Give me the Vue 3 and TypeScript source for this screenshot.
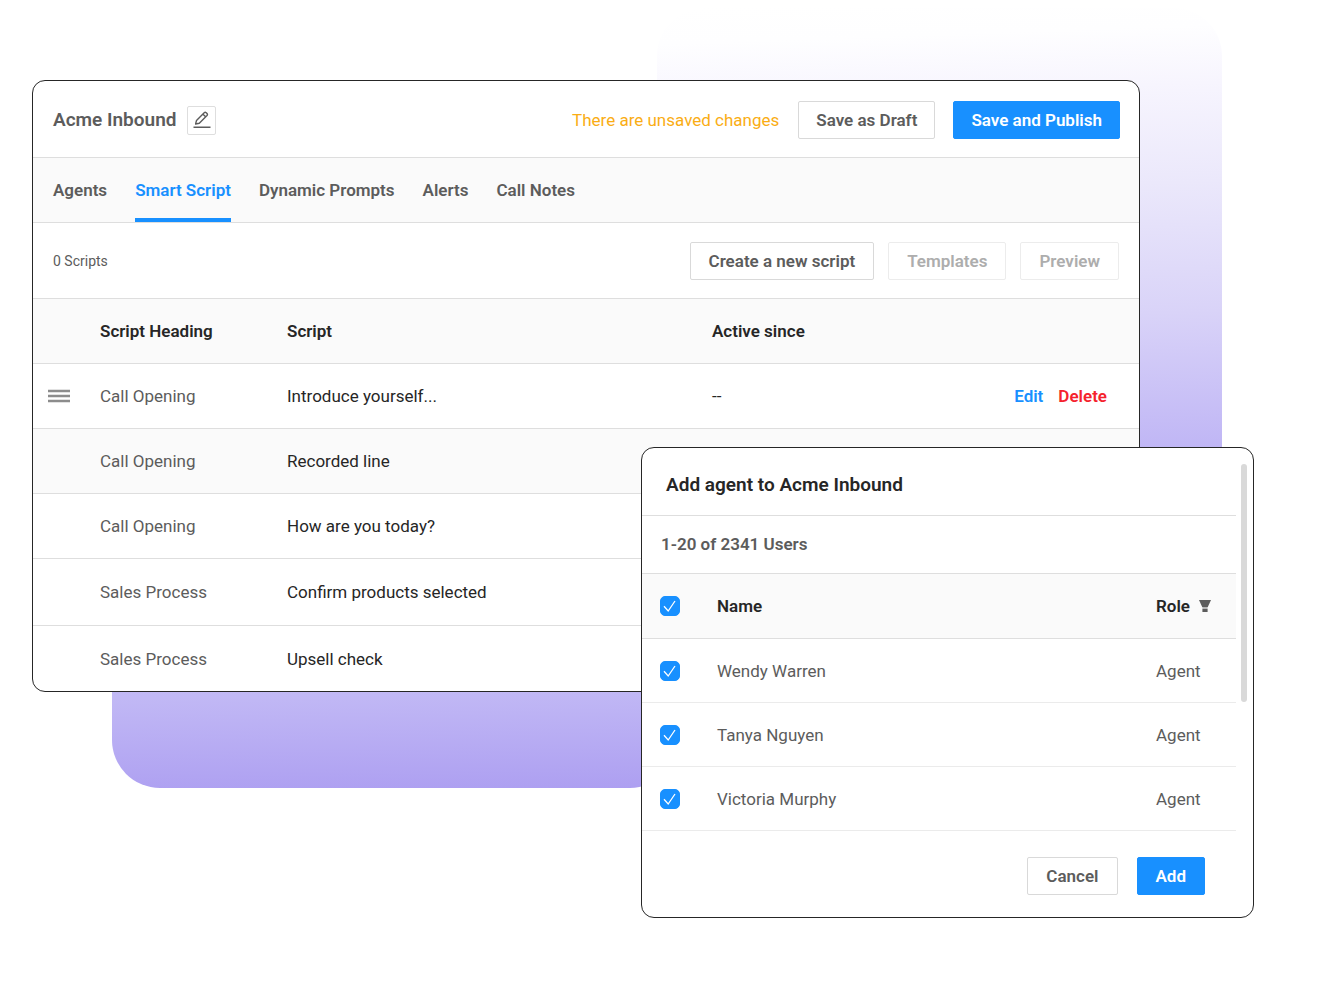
<script setup lang="ts">
import { ref } from 'vue'

interface ScriptRow {
  heading: string
  script: string
  since: string
  editable: boolean
  roomy: boolean
}

interface Agent {
  name: string
  role: string
  picked: boolean
}

const tabs: string[] = ['Agents', 'Smart Script', 'Dynamic Prompts', 'Alerts', 'Call Notes']
const activeTab = ref('Smart Script')

const scripts: ScriptRow[] = [
  { heading: 'Call Opening', script: 'Introduce yourself...', since: '--', editable: true, roomy: false },
  { heading: 'Call Opening', script: 'Recorded line', since: '', editable: false, roomy: false },
  { heading: 'Call Opening', script: 'How are you today?', since: '', editable: false, roomy: false },
  { heading: 'Sales Process', script: 'Confirm products selected', since: '', editable: false, roomy: true },
  { heading: 'Sales Process', script: 'Upsell check', since: '', editable: false, roomy: true },
]

const allPicked = ref(true)
const agents = ref<Agent[]>([
  { name: 'Wendy Warren', role: 'Agent', picked: true },
  { name: 'Tanya Nguyen', role: 'Agent', picked: true },
  { name: 'Victoria Murphy', role: 'Agent', picked: true },
])

function toggleAll(): void {
  agents.value.forEach((a) => (a.picked = allPicked.value))
}
</script>

<template>
  <div class="scene">
    <div class="glow glow-top"></div>
    <div class="glow glow-bottom"></div>

    <main class="panel">
      <header class="panel-head">
        <h1>Acme Inbound</h1>
        <button class="icon-btn" type="button" aria-label="Rename">
          <svg viewBox="0 0 18 18" width="18" height="18" fill="none" stroke="#5c5c5c">
            <path d="M2.6 13 L3.5 9.4 L11.2 1.7 Q12.2 .8 13.2 1.7 L14 2.5 Q14.9 3.5 14 4.5 L6.3 12.2 Z M10 3.2 L12.6 5.8" stroke-width="1.4" stroke-linejoin="round" />
            <path d="M.5 16.2 H17.5" stroke-width="1.6" />
          </svg>
        </button>
        <span class="notice">There are unsaved changes</span>
        <div class="head-actions">
          <button class="btn" type="button">Save as Draft</button>
          <button class="btn primary" type="button">Save and Publish</button>
        </div>
      </header>

      <nav class="tabs">
        <a
          v-for="tab in tabs"
          :key="tab"
          href="#"
          :class="{ active: tab === activeTab }"
          @click.prevent="activeTab = tab"
        >{{ tab }}</a>
      </nav>

      <section class="toolbar">
        <span class="count">0 Scripts</span>
        <button class="btn" type="button">Create a new script</button>
        <button class="btn" type="button" disabled>Templates</button>
        <button class="btn" type="button" disabled>Preview</button>
      </section>

      <table class="scripts">
        <colgroup>
          <col class="c-grip" />
          <col class="c-heading" />
          <col class="c-script" />
          <col class="c-since" />
          <col />
        </colgroup>
        <thead>
          <tr>
            <th></th>
            <th>Script Heading</th>
            <th>Script</th>
            <th>Active since</th>
            <th></th>
          </tr>
        </thead>
        <tbody>
          <tr v-for="(row, i) in scripts" :key="i" :class="{ roomy: row.roomy, shaded: i === 1 }">
            <td class="grip">
              <svg v-if="row.editable" viewBox="0 0 22 14" width="22" height="14" stroke="#8c8c8c" stroke-width="2.4">
                <path d="M0 2 H22 M0 7 H22 M0 12 H22" />
              </svg>
            </td>
            <td class="muted">{{ row.heading }}</td>
            <td>{{ row.script }}</td>
            <td>{{ row.since }}</td>
            <td class="row-actions">
              <template v-if="row.editable">
                <a href="#" class="edit">Edit</a>
                <a href="#" class="delete">Delete</a>
              </template>
            </td>
          </tr>
        </tbody>
      </table>
    </main>

    <section class="dialog" role="dialog" aria-labelledby="dialog-title">
      <div class="dialog-body">
        <h2 id="dialog-title">Add agent to Acme Inbound</h2>
        <p class="range">1-20 of 2341 Users</p>
        <table class="agents">
          <colgroup>
            <col class="c-check" />
            <col />
            <col class="c-role" />
          </colgroup>
          <thead>
            <tr>
              <th>
                <label class="check">
                  <input v-model="allPicked" type="checkbox" aria-label="Select all" @change="toggleAll" />
                  <svg viewBox="0 0 20 20" width="20" height="20"><path d="M4 10.2 L8.2 15 L15 5" /></svg>
                </label>
              </th>
              <th>Name</th>
              <th>
                <span class="role-head">Role
                  <svg viewBox="0 0 12 12" width="12" height="12">
                    <path d="M0 0 H12 L8.8 7 H3.2 Z" fill="#5c5c5c" />
                    <path d="M3.4 7 H8.6 V9 H3.4 Z" fill="#b4b4b4" />
                    <path d="M3.4 9 H8.6 V12 H3.4 Z" fill="#5c5c5c" />
                  </svg>
                </span>
              </th>
            </tr>
          </thead>
          <tbody>
            <tr v-for="agent in agents" :key="agent.name">
              <td>
                <label class="check">
                  <input v-model="agent.picked" type="checkbox" :aria-label="agent.name" />
                  <svg viewBox="0 0 20 20" width="20" height="20"><path d="M4 10.2 L8.2 15 L15 5" /></svg>
                </label>
              </td>
              <td>{{ agent.name }}</td>
              <td>{{ agent.role }}</td>
            </tr>
          </tbody>
        </table>
        <footer class="dialog-foot">
          <button class="btn" type="button">Cancel</button>
          <button class="btn primary" type="button">Add</button>
        </footer>
      </div>
      <div class="track"><div class="thumb"></div></div>
    </section>
  </div>
</template>

<style>
body {
  margin: 0;
  background: #fff;
}
</style>

<style scoped>
.scene {
  position: relative;
  box-sizing: border-box;
  min-height: 998px;
  padding: 80px 186px 80px 32px;
  font-family: Roboto, 'Liberation Sans', sans-serif;
  font-size: 17px;
  line-height: 24px;
  color: #262626;
}
.glow {
  position: absolute;
}
.glow-top {
  top: 8px;
  right: 104px;
  width: 565px;
  height: 500px;
  border-radius: 48px;
  background: linear-gradient(178deg, #fff 0%, #fefeff 7%, #f7f5fe 18%, #ebe8fb 37%, #d9d3f8 62%, #bfb5f5 89%, #b8adf4 100%);
}
.glow-bottom {
  top: 600px;
  left: 112px;
  width: 566px;
  height: 188px;
  border-radius: 48px;
  background: linear-gradient(179deg, #cbc3f7 0%, #c1b8f5 50%, #ad9ff1 100%);
}
.panel,
.dialog {
  box-sizing: border-box;
  border: 1px solid #262626;
  border-radius: 13px;
  background: #fff;
  overflow: hidden;
}
.panel {
  position: relative;
}
.panel-head {
  display: flex;
  align-items: center;
  height: 74px;
  padding: 2px 19px 0 20px;
  border-bottom: 1px solid #dedede;
}
h1,
h2 {
  margin: 0;
  font-size: 19px;
  font-weight: 600;
}
h1 {
  color: #5c5c5c;
}
.icon-btn {
  display: grid;
  place-items: center;
  box-sizing: border-box;
  width: 29px;
  height: 29px;
  margin-left: 11px;
  padding: 0;
  border: 1px solid #dedede;
  border-radius: 2px;
  background: #fff;
}
.notice {
  margin-left: auto;
  margin-right: 19px;
  color: #faad14;
}
.head-actions {
  display: flex;
  gap: 18px;
}
.btn {
  box-sizing: border-box;
  height: 38px;
  padding: 0 18px;
  border: 1px solid #d9d9d9;
  border-radius: 2px;
  background: #fff;
  color: #5c5c5c;
  font: inherit;
  font-weight: 600;
}
.head-actions .btn {
  padding: 0 17px;
}
.btn.primary {
  border-color: #1890ff;
  background: #1890ff;
  color: #fff;
}
.btn:disabled {
  border-color: #ececec;
  color: #adadad;
}
.tabs {
  display: flex;
  gap: 28px;
  height: 64px;
  padding: 0 20px;
  border-bottom: 1px solid #dedede;
  background: #fafafa;
}
.tabs a {
  box-sizing: border-box;
  border-bottom: 4px solid transparent;
  color: #5c5c5c;
  font-weight: 600;
  line-height: 64px;
  text-decoration: none;
}
.tabs a.active {
  border-color: #1890ff;
  color: #1890ff;
}
.toolbar {
  display: flex;
  align-items: center;
  gap: 14px;
  height: 75px;
  padding: 0 20px;
  border-bottom: 1px solid #dedede;
}
.count {
  margin-right: auto;
  color: #5c5c5c;
  font-size: 14px;
}
table {
  width: 100%;
  border-collapse: separate;
  border-spacing: 0;
  table-layout: fixed;
}
th,
td {
  box-sizing: border-box;
  padding: 0;
  border-bottom: 1px solid #dedede;
  text-align: left;
  vertical-align: middle;
}
th {
  height: 65px;
  background: #fafafa;
  font-weight: 600;
}
.scripts td {
  height: 65px;
}
.scripts .roomy td {
  height: 67px;
}
.scripts tbody tr:last-child td {
  height: 65px;
  border-bottom: 0;
}
.shaded td {
  background: #fafafa;
}
.c-grip {
  width: 67px;
}
.c-heading {
  width: 187px;
}
.c-script {
  width: 425px;
}
.c-since {
  width: 200px;
}
.grip svg {
  display: block;
  margin-left: 15px;
}
.muted {
  color: #5c5c5c;
}
.row-actions {
  padding-right: 32px;
  text-align: right;
}
.row-actions a {
  margin-left: 15px;
  font-weight: 600;
  text-decoration: none;
}
.edit {
  color: #1890ff;
}
.delete {
  color: #f5222d;
}
.dialog {
  position: absolute;
  top: 447px;
  right: 72px;
  display: flex;
  width: 613px;
}
.dialog-body {
  flex: 1;
}
h2 {
  padding: 24px 24px 18px;
  line-height: 25px;
  border-bottom: 1px solid #dedede;
}
.range {
  margin: 0;
  padding: 16px 19px 17px;
  border-bottom: 1px solid #dedede;
  color: #5c5c5c;
  font-weight: 600;
}
.agents td {
  height: 64px;
  border-color: #ebebeb;
  color: #5c5c5c;
}
.c-check {
  width: 75px;
}
.c-role {
  width: 80px;
}
.check {
  display: grid;
  width: 20px;
  margin-left: 18px;
}
.check input,
.check svg {
  grid-area: 1 / 1;
  width: 20px;
  height: 20px;
  margin: 0;
}
.check input {
  appearance: none;
  border: 1px solid #d9d9d9;
  border-radius: 5px;
  background: #fff;
}
.check input:checked {
  border-color: #1890ff;
  background: #1890ff;
}
.check svg {
  fill: none;
  stroke: #fff;
  stroke-width: 1.3;
  pointer-events: none;
}
.role-head {
  display: flex;
  align-items: center;
  gap: 9px;
}
.dialog-foot {
  display: flex;
  justify-content: flex-end;
  gap: 19px;
  padding: 26px 31px 22px;
}
.track {
  width: 17px;
  padding: 16px 0 0 5px;
  box-sizing: border-box;
}
.thumb {
  width: 6px;
  height: 238px;
  border-radius: 3px;
  background: #d9d9d9;
}
</style>
